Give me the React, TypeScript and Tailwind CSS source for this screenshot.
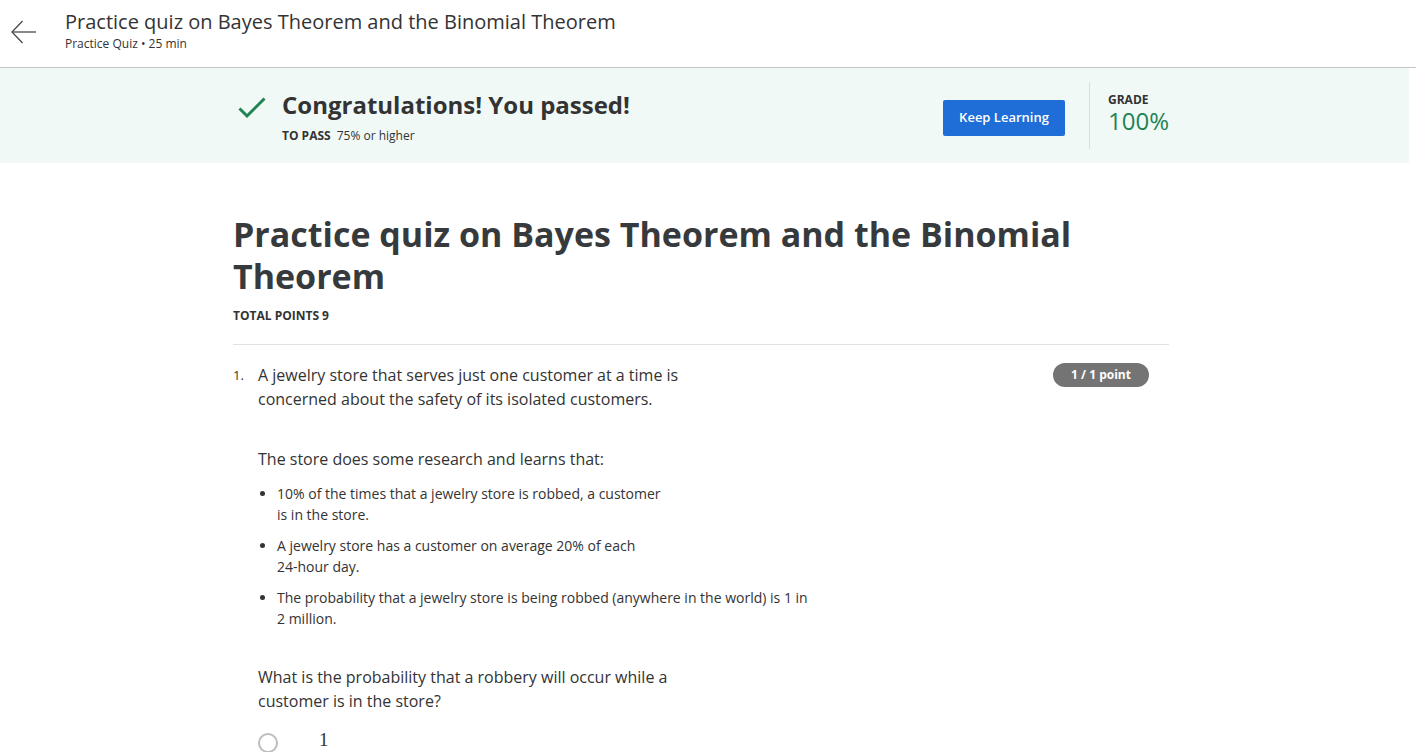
import React from "react";

const bullets = [
  ["10% of the times that a jewelry store is robbed, a customer", "is in the store."],
  ["A jewelry store has a customer on average 20% of each", "24-hour day."],
  ["The probability that a jewelry store is being robbed (anywhere in the world) is 1 in", "2 million."],
];

export default function App() {
  return (
    <div className="min-h-screen bg-white font-['Open_Sans',sans-serif] text-[#333]">
      {/* 상단 헤더 */}
      <header className="flex h-[68px] border-b border-[#c6c6c6]">
        <div className="flex w-[65px] items-start pl-[10px] pt-[19px]">
          <svg width="28" height="26" viewBox="0 0 28 26" fill="none" stroke="#4a4a4a" strokeWidth="1.3">
            <path d="M26 13H2" />
            <path d="M12.5 2L2 13l10.5 11" />
          </svg>
        </div>
        <div className="pt-[8px]">
          <h1 className="text-[20px] leading-7 text-[#333]">
            Practice quiz on Bayes Theorem and the Binomial Theorem
          </h1>
          <p className="text-[12px] leading-4 text-[#333]">Practice Quiz • 25 min</p>
        </div>
      </header>

      {/* 합격 배너 */}
      <section className="mr-[7px] flex h-[95px] bg-[#f1f9f7] pl-[233px]">
        <div className="flex w-[936px] items-center justify-between">
          <div className="flex items-start self-start pt-[21px]">
            <svg className="ml-[5px] mt-[8px]" width="28" height="22" viewBox="0 0 28 22" fill="none" stroke="#1f8354" strokeWidth="3">
              <path d="M1.5 11.5l7.5 7.5L26.5 1.5" />
            </svg>
            <div className="ml-[16px]">
              <h2 className="text-[24px] font-bold leading-8">Congratulations! You passed!</h2>
              <p className="mt-[7px] text-[12px] leading-4">
                <span className="font-bold">TO PASS</span>
                <span className="ml-[6px]">75% or higher</span>
              </p>
            </div>
          </div>
          <div className="flex h-[67px] items-center">
            <button className="mt-[5px] h-[36px] w-[122px] rounded-[2px] bg-[#1f6dd6] text-[13px] font-semibold text-white">
              Keep Learning
            </button>
            <div className="ml-[24px] h-[67px] w-px bg-[#d9dedd]" />
            <div className="ml-[18px] w-[61px] self-start pt-[11px]">
              <p className="text-[12px] font-bold leading-[14px]">GRADE</p>
              <p className="mt-[1px] text-[24px] leading-[26px] text-[#1f8354]">100%</p>
            </div>
          </div>
        </div>
      </section>

      {/* 본문 */}
      <main className="pl-[233px]">
        <div className="w-[936px]">
          <h1 className="mt-[50px] text-[34px] font-bold leading-[42px] text-[#373a3c]">
            Practice quiz on Bayes Theorem and the Binomial Theorem
          </h1>
          <p className="mt-[11px] text-[12px] font-bold leading-4">TOTAL POINTS 9</p>
          <div className="mt-[20px] h-px bg-[#e2e2e2]" />

          <div className="flex pt-[18px]">
            <span className="w-[25px] text-[13px] leading-6">1.</span>
            <div className="flex-1">
              <div className="flex items-start justify-between pr-[20px]">
                <p className="text-[16px] leading-6">
                  A jewelry store that serves just one customer at a time is
                  <br />
                  concerned about the safety of its isolated customers.
                </p>
                <span className="flex h-[24px] w-[96px] items-center justify-center rounded-full bg-[#747474] text-[12px] font-bold text-white">
                  1 / 1 point
                </span>
              </div>

              <p className="mt-[36px] text-[16px] leading-6">
                The store does some research and learns that:
              </p>

              <ul className="mt-[12px] flex flex-col gap-[10px]">
                {bullets.map((b, i) => (
                  <li key={i} className="flex text-[14px] leading-[21px]">
                    <span className="flex h-[21px] w-[19px] items-center pl-[2px]">
                      <span className="h-[5px] w-[5px] rounded-full bg-[#333]" />
                    </span>
                    <span>
                      {b[0]}
                      <br />
                      {b[1]}
                    </span>
                  </li>
                ))}
              </ul>

              <p className="mt-[36px] text-[16px] leading-6">
                What is the probability that a robbery will occur while a
                <br />
                customer is in the store?
              </p>

              <div className="mt-[20px] flex items-center">
                <span className="h-[20px] w-[20px] rounded-full border-2 border-[#bdbdbd]" />
                <span className="ml-[41px] -mt-[7px] font-['Liberation_Serif',serif] text-[19px] leading-6">1</span>
              </div>
            </div>
          </div>
        </div>
      </main>
    </div>
  );
}
